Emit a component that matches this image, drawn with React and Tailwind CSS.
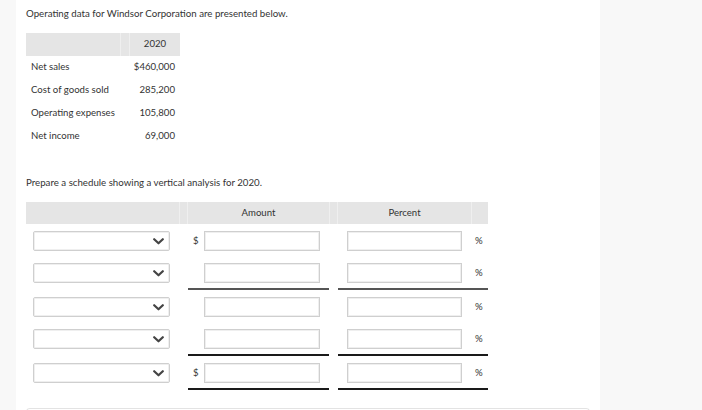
import React from "react";

const font = { fontFamily: "Lato, 'Open Sans', sans-serif" };

function Chevron() {
  return (
    <svg width="11" height="7" viewBox="0 0 11 7" className="absolute right-[5px] top-[6px]">
      <polyline points="1.2,1.2 5.5,5.3 9.8,1.2" fill="none" stroke="#444" strokeWidth="2.2" strokeLinecap="round" strokeLinejoin="round" />
    </svg>
  );
}

function Row({ dollar, line, lineColor }) {
  const b = line ? (lineColor === "gray" ? "border-b-2 border-[#555555]" : "border-b-2 border-[#1a1a1a]") : "";
  return (
    <div className="grid grid-cols-[153px_9px_141px_9px_133px_17px]">
      <div className="pt-[7px] pl-[7px]">
        <div className="relative w-[137px] h-[20px] border border-[#cfcfcf] bg-white rounded-[2px] shadow-[inset_0_0_0_1px_#efefef]">
          <Chevron />
        </div>
      </div>
      <div></div>
      <div className={`h-[32px] box-content flex items-start pt-0 ${b}`}>
        <div className="flex items-start pt-[7px]">
          <span className="w-[16px] pl-[5px] text-[9.6px] leading-[20px] text-[#333]">{dollar ? "$" : ""}</span>
          <div className="w-[116px] h-[20px] border border-[#cfcfcf] bg-white shadow-[inset_0_0_0_1px_#efefef]"></div>
        </div>
      </div>
      <div></div>
      <div className={`col-span-2 h-[32px] box-content ${b}`}>
        <div className="flex items-start pt-[7px]">
          <div className="ml-[9px] w-[115px] h-[20px] border border-[#cfcfcf] bg-white shadow-[inset_0_0_0_1px_#efefef]"></div>
          <span className="ml-[13px] text-[9.6px] leading-[20px] text-[#333]">%</span>
        </div>
      </div>
    </div>
  );
}

export default function App() {
  const data = [
    ["Net sales", "$460,000"],
    ["Cost of goods sold", "285,200"],
    ["Operating expenses", "105,800"],
    ["Net income", "69,000"],
  ];
  return (
    <div className="w-[702px] h-[410px] bg-[#f8f8f8] overflow-hidden" style={font}>
      <div className="ml-[16px] w-[584px] h-full bg-white pl-[10px] pt-[7px] text-[#333]">
        <p className="text-[9.7px] leading-[12px]">
          Operating data for Windsor Corporation are presented below.
        </p>
        <div className="mt-[14px] w-[154px] text-[9.6px]">
          <div className="grid grid-cols-[94px_10px_50px] h-[23px] bg-[#e5e5e5]">
            <div></div>
            <div className="border-l border-r border-[#efefef]"></div>
            <div className="flex items-center justify-center">2020</div>
          </div>
          {data.map(([l, v]) => (
            <div key={l} className="flex justify-between items-center h-[23px] pl-[5px] pr-[5px]">
              <span>{l}</span>
              <span>{v}</span>
            </div>
          ))}
        </div>
        <p className="mt-[28px] text-[9.7px] leading-[12px]">
          Prepare a schedule showing a vertical analysis for 2020.
        </p>
        <div className="mt-[14px] w-[462px]">
          <div className="grid grid-cols-[153px_9px_141px_9px_133px_17px] h-[22px] bg-[#e5e5e5] text-[9.6px]">
            <div></div>
            <div className="border-l border-r border-[#efefef]"></div>
            <div className="flex items-center justify-center">Amount</div>
            <div className="border-l border-r border-[#efefef]"></div>
            <div className="flex items-center justify-center">Percent</div>
            <div className="border-l border-[#efefef]"></div>
          </div>
          <Row dollar />
          <Row line lineColor="gray" />
          <Row />
          <Row line />
          <Row dollar line />
        </div>
        <div className="mt-[18px] w-[564px] h-[20px] border-t border-l border-r border-[#e3e3e3] rounded-t-[4px]"></div>
      </div>
    </div>
  );
}
